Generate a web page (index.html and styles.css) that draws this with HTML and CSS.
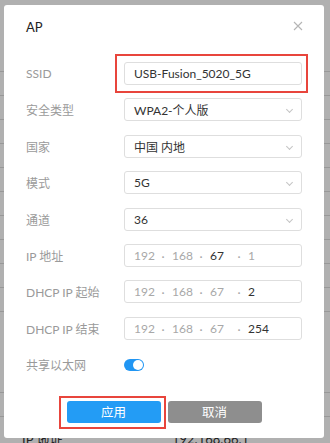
FILE: index.html
```html
<!DOCTYPE html>
<html lang="zh-CN">
<head>
  <meta charset="UTF-8" />
  <meta name="viewport" content="width=device-width, initial-scale=1.0" />
  <title>AP</title>
  <link rel="stylesheet" href="styles.css">
</head>
<body>
  <!-- page behind the dialog -->
  <div class="page">
    <div class="page-rows">
      <div class="prow"></div><div class="prow"></div><div class="prow"></div>
      <div class="prow"></div><div class="prow"></div><div class="prow"></div>
      <div class="prow"></div><div class="prow"></div><div class="prow"></div>
      <div class="prow"></div><div class="prow"></div>
    </div>
    <div class="prow tall"></div>
    <div class="prow"></div>
    <div class="prow text"><span class="pk">IP 地址</span><span class="pv">192.168.66.1</span></div>
  </div>
  <div class="mask"></div>

  <div class="dialog">
    <div class="head">
      <span class="title">AP</span>
      <span class="close">
        <svg width="10" height="10" viewBox="0 0 10 10"><path d="M1 1L9 9M9 1L1 9" stroke="#b5b5b5" stroke-width="1.1" fill="none"/></svg>
      </span>
    </div>

    <div class="form">
      <div class="row">
        <span class="label">SSID</span>
        <span class="mark mark-ssid"><span class="input">USB-Fusion_5020_5G</span></span>
      </div>
      <div class="row">
        <span class="label">安全类型</span>
        <span class="input select">WPA2-个人版<i class="chev"></i></span>
      </div>
      <div class="row">
        <span class="label">国家</span>
        <span class="input select">中国 内地<i class="chev"></i></span>
      </div>
      <div class="row">
        <span class="label">模式</span>
        <span class="input select">5G<i class="chev"></i></span>
      </div>
      <div class="row">
        <span class="label">通道</span>
        <span class="input select">36<i class="chev"></i></span>
      </div>
      <div class="row">
        <span class="label">IP 地址</span>
        <span class="input ip"><b>192</b><em>·</em><b>168</b><em>·</em><b class="on">67</b><em>·</em><b>1</b></span>
      </div>
      <div class="row">
        <span class="label">DHCP IP 起始</span>
        <span class="input ip"><b>192</b><em>·</em><b>168</b><em>·</em><b>67</b><em>·</em><b class="on">2</b></span>
      </div>
      <div class="row">
        <span class="label">DHCP IP 结束</span>
        <span class="input ip"><b>192</b><em>·</em><b>168</b><em>·</em><b>67</b><em>·</em><b class="on">254</b></span>
      </div>
      <div class="row">
        <span class="label">共享以太网</span>
        <span class="switch"><i></i></span>
      </div>
    </div>

    <div class="actions">
      <span class="mark mark-btn"><button class="btn primary">应用</button></span>
      <button class="btn gray">取消</button>
    </div>
  </div>
</body>
</html>
```

FILE: styles.css
```css
* { box-sizing: border-box; }
body {
  margin: 0;
  width: 330px;
  height: 443px;
  overflow: hidden;
  position: relative;
  background: #fff;
  font-family: Lato, "Noto Sans CJK SC", sans-serif;
  color: #333;
}

/* page underneath */
.page { padding-top: 48px; }
.prow {
  height: 24px;
  border-bottom: 1px solid #dcdcdc;
}
.prow.tall { height: 81px; }
.prow.text {
  display: flex;
  align-items: center;
  height: 40px;
  border: none;
  font-size: 13px;
  color: #333;
  padding-top: 4px;
}
.pk { margin-left: 22px; width: 150px; }
.mask {
  position: absolute;
  inset: 0;
  background: rgba(0,0,0,0.31);
}

/* dialog */
.dialog {
  position: absolute;
  left: 4px;
  top: 5px;
  width: 320px;
  height: 433px;
  background: #fff;
  border-radius: 3px;
  padding: 0 22px;
}
.head {
  display: flex;
  justify-content: space-between;
  align-items: center;
  padding-top: 14px;
  height: 30px;
}
.title {
  font-size: 13px;
  line-height: 16px;
  color: #222;
}
.close { display: flex; margin-right: -1px; margin-top: -3px; }

.form {
  margin-top: 27px;
  display: flex;
  flex-direction: column;
  gap: 13.4px;
}
.row {
  display: grid;
  grid-template-columns: 98px 178px;
  align-items: center;
  height: 23px;
}
.label {
  font-size: 12px;
  color: #9a9a9a;
}
.input {
  display: flex;
  align-items: center;
  height: 23px;
  border: 1px solid #dedede;
  border-radius: 3px;
  padding-left: 9px;
  font-size: 12px;
  color: #333;
  position: relative;
}
.select .chev {
  position: absolute;
  right: 9px;
  top: 8px;
  width: 5px;
  height: 5px;
  border-right: 1px solid #c4c4c4;
  border-bottom: 1px solid #c4c4c4;
  transform: rotate(45deg);
}
.ip b, .ip em {
  font-weight: normal;
  font-style: normal;
  color: #a8a8a8;
}
.ip b { width: 20px; }
.ip em { width: 18px; text-align: center; padding-top: 2px; }
.ip b.on { color: #333; }

.switch {
  width: 20px;
  height: 12px;
  border-radius: 6px;
  background: #2196f3;
  position: relative;
}
.switch i {
  position: absolute;
  right: 1px;
  top: 1px;
  width: 10px;
  height: 10px;
  border-radius: 50%;
  background: #fff;
}

/* red annotation boxes */
.mark { position: relative; display: block; }
.mark::after {
  content: "";
  position: absolute;
  border: 2px solid #e8453c;
  pointer-events: none;
}
.mark-ssid::after { left: -9px; right: -6px; top: -8px; bottom: -8px; }
.mark-btn::after { left: -8px; right: -5px; top: -5px; bottom: -6px; }

.actions {
  display: flex;
  justify-content: center;
  gap: 7px;
  margin-top: 24.5px;
}
.btn {
  display: block;
  width: 94px;
  height: 22.5px;
  border: none;
  border-radius: 3px;
  color: #fff;
  font-family: Lato, "Noto Sans CJK SC", sans-serif;
  font-size: 12.5px;
  padding: 0;
}
.primary { background: #239cf5; }
.gray { background: #8e8e8e; }
```
